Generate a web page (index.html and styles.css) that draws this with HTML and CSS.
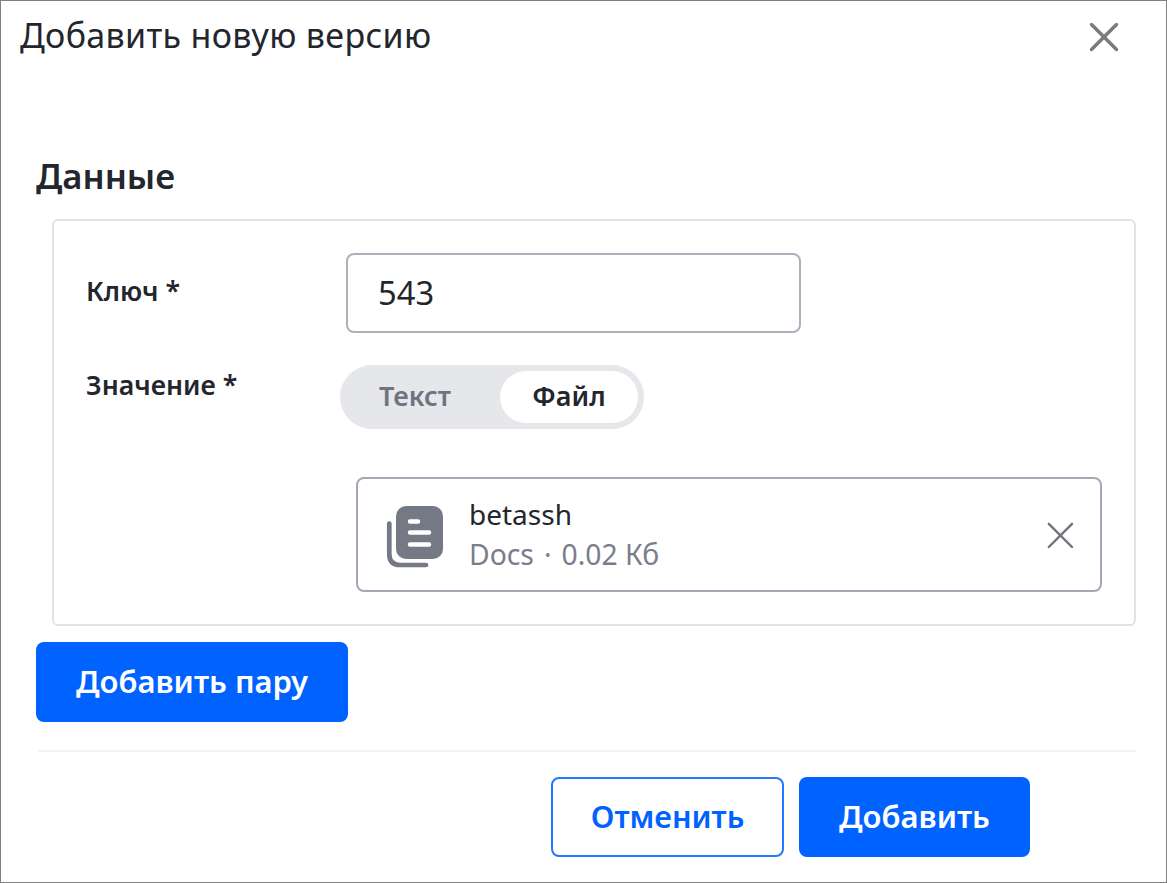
FILE: index.html
```html
<!DOCTYPE html>
<html lang="ru">
<head>
<meta charset="utf-8">
<title>Добавить новую версию</title>
<link rel="stylesheet" href="styles.css">
</head>
<body>
<div class="dialog">
  <header class="dialog-head">
    <h1 class="dialog-title">Добавить новую версию</h1>
    <button class="close" aria-label="Закрыть">
      <svg width="32" height="32" viewBox="0 0 32 32"><path d="M3.5 3.5 28.500 28.500M28.500 3.500 3.500 28.500" stroke="#7a7a7a" stroke-width="3.400" stroke-linecap="round" fill="none"/></svg>
    </button>
  </header>
  <main class="dialog-body">
    <h2 class="section-title">Данные</h2>
    <section class="pair-card">
      <div class="row row-key">
        <div class="label">Ключ *</div>
        <div class="input">543</div>
      </div>
      <div class="row row-value">
        <div class="label">Значение *</div>
        <div class="segmented">
          <span class="seg seg-off">Текст</span>
          <span class="seg seg-on">Файл</span>
        </div>
      </div>
      <div class="file">
        <svg class="file-icon" width="58" height="66" viewBox="0 0 58 66">
          <path d="M3.300 21.500V52Q3.300 63 14 63H40" fill="none" stroke="#757985" stroke-width="4.700" stroke-linecap="round"/>
          <rect x="10" y="4" width="47" height="53" rx="10" fill="#757985"/>
          <path d="M24 19.500H32M24 30.500H43M24 42.500H43" stroke="#fff" stroke-width="4.500" stroke-linecap="round"/>
        </svg>
        <div class="file-info">
          <div class="file-name">betassh</div>
          <div class="file-meta">Docs<span class="dot">·</span>0.02 Кб</div>
        </div>
        <svg class="file-x" width="30" height="30" viewBox="0 0 30 30"><path d="M3.800 3.800 27 27M27 3.800 3.800 27" stroke="#6f737e" stroke-width="2.400" stroke-linecap="round" fill="none"/></svg>
      </div>
    </section>
    <button class="btn btn-primary btn-pair">Добавить пару</button>
    <div class="divider"></div>
    <footer class="actions">
      <button class="btn btn-outline">Отменить</button>
      <button class="btn btn-primary btn-add">Добавить</button>
    </footer>
  </main>
</div>
</body>
</html>
```
FILE: styles.css
```css
* { box-sizing: border-box; }
html, body { margin: 0; padding: 0; background: #fff; }
body { font-family: "Noto Sans", "Open Sans", sans-serif; color: #23262d; }
.dialog {
  width: 1167px;
  height: 883px;
  border: 1px solid #808080;
  background: #fff;
  overflow: hidden;
}
.dialog-head {
  display: flex;
  justify-content: space-between;
  align-items: center;
  height: 71px;
  padding: 0 46px 0 19px;
}
.dialog-title { margin: 0 0 2px; font-size: 34px; font-weight: 400; line-height: 69px; letter-spacing: 0.33px; }
.close { padding: 0; border: 0; background: none; display: flex; }
.dialog-body { padding: 0 30px 0 35px; }
.section-title { margin: 79px 0 0; font-size: 34.700px; font-weight: 600; line-height: 50px; padding-bottom: 1px; }
.pair-card {
  margin: 17px 0 0 16px;
  height: 407px;
  border: 2px solid #e0e2e9;
  border-radius: 6px;
  padding: 32px;
}
.row { display: flex; }
.label { width: 254px; font-size: 26.700px; font-weight: 600; line-height: 34px; padding-top: 3px; flex: none; }
.row-key { height: 112px; }
.row-key .label { padding-top: 21px; }
.input {
  width: 455px;
  height: 80px;
  margin-left: 6px;
  border: 2px solid #aeb1bc;
  border-radius: 8px;
  padding: 0 30px;
  font-size: 32.700px;
  line-height: 76px;
}
.segmented {
  display: flex;
  align-items: center;
  justify-content: space-between;
  width: 304px;
  height: 64px;
  padding: 6px;
  background: #e6e7eb;
  border-radius: 32px;
}
.seg { font-size: 27px; font-weight: 600; text-align: center; height: 52px; line-height: 50px; }
.seg-off { color: #6f737e; width: 154px; padding-right: 16px; }
.seg-on { width: 138px; background: #fff; border-radius: 26px; }
.file {
  display: flex;
  align-items: center;
  width: 746px;
  height: 115px;
  margin: 48px 0 0 270px;
  border: 2px solid #a5a8b4;
  border-radius: 8px;
  padding: 0 25px 0 28px;
}
.file-icon { flex: none; }
.file-info { flex: 1; margin-left: 25px; padding-bottom: 2px; }
.file-name { font-size: 28px; line-height: 40px; }
.file-meta { font-size: 28.300px; line-height: 40px; color: #7a7e8a; }
.dot { margin: 0 10px; }
.file-x { flex: none; }
.btn {
  height: 80px;
  border-radius: 8px;
  font-family: inherit;
  font-size: 31px;
  font-weight: 600;
  padding: 0 0 2px;
  display: block;
}
.btn-primary { background: #0063ff; color: #fff; border: 0; }
.btn-pair { width: 312px; margin-top: 16px; }
.divider { height: 2px; background: #f3f4f6; margin: 28px 0 0 2px; }
.actions { display: flex; gap: 15px; margin: 25px 0 0 515px; }
.btn-outline { width: 233px; background: #fff; color: #0063ff; border: 2px solid #2478ff; font-size: 30.700px; }
.btn-add { width: 231px; }
```
